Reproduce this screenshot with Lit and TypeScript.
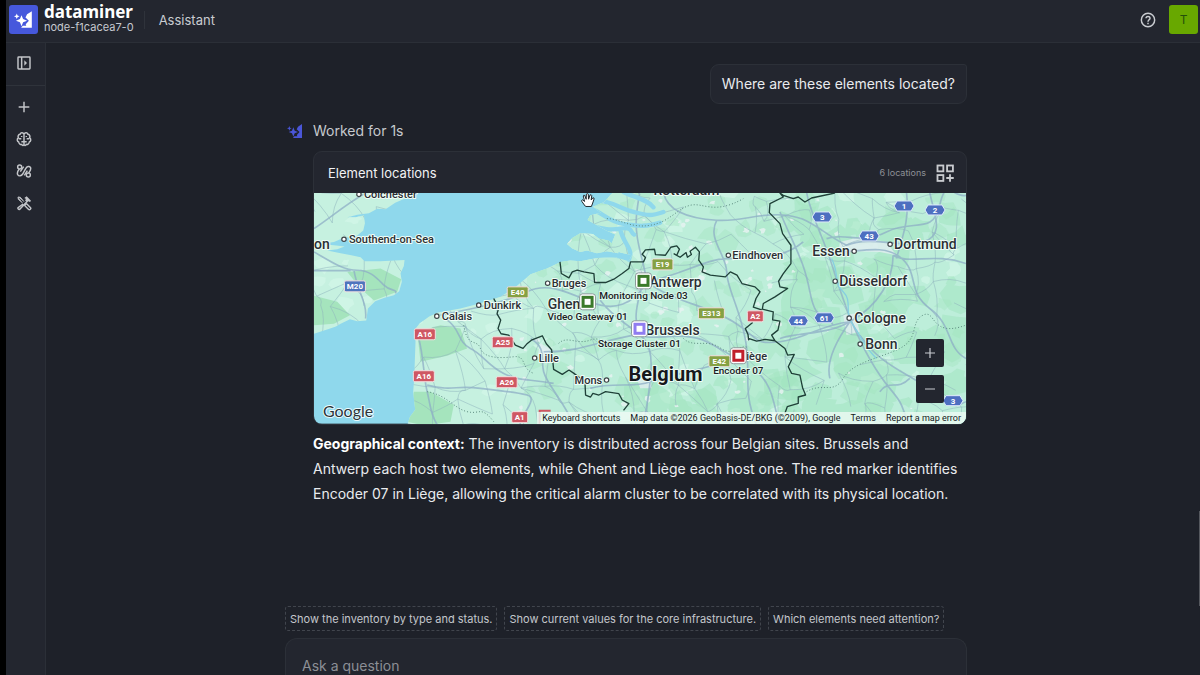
import { LitElement, html, svg, css } from "lit";
import { customElement } from "lit/decorators.js";

/* ---------- map data ---------- */

type Place = { name: string; x: number; y: number; size: number; weight?: number; dot?: number };

const places: Place[] = [
  { name: "Colchester", x: 50, y: 5, size: 11, dot: 46 },
  { name: "Southend-on-Sea", x: 35, y: 50, size: 11, dot: 31 },
  { name: "on", x: 0, y: 56, size: 14 },
  { name: "Calais", x: 128, y: 127, size: 11, dot: 124 },
  { name: "Dunkirk", x: 170, y: 116, size: 11, dot: 166 },
  { name: "Bruges", x: 238, y: 94, size: 11, dot: 235 },
  { name: "Lille", x: 225, y: 169, size: 11, dot: 222 },
  { name: "Mons", x: 261, y: 191, size: 11, dot: 294 },
  { name: "Ghent", x: 234, y: 116, size: 14 },
  { name: "Antwerp", x: 336, y: 94, size: 14 },
  { name: "Brussels", x: 332, y: 142, size: 14 },
  { name: "Liège", x: 427, y: 167, size: 11 },
  { name: "Rotterdam", x: 340, y: 2, size: 14 },
  { name: "Eindhoven", x: 419, y: 66, size: 11, dot: 416 },
  { name: "Essen", x: 499, y: 63, size: 14, dot: 542 },
  { name: "Dortmund", x: 581, y: 56, size: 14, dot: 578 },
  { name: "Düsseldorf", x: 526, y: 93, size: 14, dot: 523 },
  { name: "Cologne", x: 541, y: 130, size: 14, dot: 537 },
  { name: "Bonn", x: 552, y: 156, size: 14, dot: 548 },
  { name: "Belgium", x: 315, y: 188, size: 20, weight: 700 },
];

type Shield = { name: string; x: number; y: number; kind: "red" | "green" | "blue" | "hex" };

const shields: Shield[] = [
  { name: "M20", x: 41, y: 93, kind: "blue" },
  { name: "E40", x: 204, y: 99, kind: "green" },
  { name: "A16", x: 111, y: 141, kind: "red" },
  { name: "A16", x: 110, y: 183, kind: "red" },
  { name: "A25", x: 189, y: 149, kind: "red" },
  { name: "A26", x: 193, y: 189, kind: "red" },
  { name: "A1", x: 206, y: 224, kind: "red" },
  { name: "E19", x: 349, y: 71, kind: "green" },
  { name: "E313", x: 398, y: 120, kind: "green" },
  { name: "E42", x: 406, y: 168, kind: "green" },
  { name: "A2", x: 442, y: 123, kind: "red" },
  { name: "3", x: 509, y: 24, kind: "hex" },
  { name: "1", x: 591, y: 13, kind: "hex" },
  { name: "2", x: 622, y: 17, kind: "hex" },
  { name: "43", x: 556, y: 43, kind: "hex" },
  { name: "44", x: 485, y: 128, kind: "hex" },
  { name: "61", x: 511, y: 125, kind: "hex" },
  { name: "3", x: 640, y: 208, kind: "hex" },
];

const markers = [
  { name: "Monitoring Node 03", x: 330, y: 88, color: "#3b7a2a" },
  { name: "Video Gateway 01", x: 274, y: 109, color: "#3b7a2a" },
  { name: "Storage Cluster 01", x: 326, y: 136, color: "#8f7cf0" },
  { name: "Encoder 07", x: 425, y: 163, color: "#c01f2b" },
];

const england =
  "M0 0H300L272 20 244 32 215 52 190 50 165 64 130 68 100 76 125 76 150 70 153 94 148 116 128 132 84 140 60 150 20 156 60 160 92 164 70 172 40 176 80 184 112 190 140 196 152 208 200 208 272 204 270 222 260 244 264 270 256 298 240 310 212 318 184 328 162 350 157 386 130 388 108 382 80 396 66 404 44 412 0 426Z";
const continent =
  "M280 702L288 676 304 654 298 600 301 560 305 450 304 412 318 394 346 374 372 362 440 350 500 334 560 315 600 290 651 247 700 230 741 210 770 206 800 208 850 198 905 196 945 208 956 190 920 182 890 166 905 128 878 116 850 100 822 84 830 70 862 62 838 44 872 30 890 10 900 0H1959V702Z";
const islands = [
  "M760 156L776 138 800 124 838 126 856 140 884 146 916 170 914 184 880 178 850 184 820 176 800 180 776 170Z",
];
const inlets = [
  "M740 196C790 176 806 192 850 190S910 190 930 196 944 212 950 190 926 150 920 110",
  "M810 96C850 104 880 118 920 110S950 124 962 128",
  "M820 46C870 60 880 88 930 96S1000 104 1040 92",
  "M856 26C900 30 920 50 960 60S1010 74 1050 60",
  "M930 0C960 16 1000 20 1020 46",
];
const borders = [
  "M739 210L741 225 743 245 766 258 776 240 791 235 811 240 841 245 843 272 876 272 901 262 926 245 946 230 951 210 990 210 996 197 986 187 996 174 1023 172 1026 188 1056 190 1072 166 1090 162 1098 172 1090 190 1082 186 1100 196 1118 182 1122 196 1134 188 1130 178 1146 166 1158 180 1156 205 1170 225 1166 240 1191 250 1236 255 1251 240 1271 250 1286 275 1325 285 1340 300 1328 320 1320 346 1345 354",
  "M1565 3L1495 18 1475 30 1455 15 1440 20 1410 10 1400 3 1410 15 1370 35 1368 62 1400 95 1408 125 1433 160 1433 215 1410 245 1396 268 1400 285 1423 290 1385 315 1350 335 1347 352 1380 360 1378 384 1400 388 1394 415 1375 430 1385 447 1355 443 1330 448 1305 440",
  "M1385 447L1415 470 1423 490 1443 488 1425 525 1435 545 1460 550 1468 588 1477 610 1455 616 1455 635 1422 645 1415 665",
  "M1318 392L1296 410 1304 428 1306 446",
  "M540 320L555 348 550 366 561 385 553 410 562 426 585 430 605 460 628 470 641 455 655 444 686 432 698 456 714 474 720 533 746 548 766 535 781 545 814 570 816 610 831 616 838 605 856 610 876 600 916 606 926 625 946 636 930 656",
];
const dotted = [
  "M450 400C460 470 490 440 500 470S560 500 600 495 620 530 660 545",
  "M340 600C400 610 420 650 460 660S500 640 540 690",
  "M735 455C760 430 790 460 830 445S880 470 960 460",
  "M1110 440C1140 470 1180 440 1220 468S1270 460 1300 466",
  "M1480 600C1530 570 1560 610 1590 560S1700 500 1760 470 1790 390 1830 370 1850 440 1959 400",
  "M880 80C920 80 950 110 1010 100S1090 50 1130 40 1200 70 1290 20",
];
const highways = [
  "M0 180C60 215 90 235 130 235S190 260 210 280 250 290 245 305",
  "M0 236H110M0 110C60 70 90 40 160 0M120 235C130 300 160 330 155 380",
  "M315 440C330 500 330 560 340 600S350 670 372 702",
  "M400 385C440 410 430 450 470 470S520 520 570 545 640 560 720 575",
  "M340 580C420 600 420 580 500 590S600 600 640 610 610 680 620 702",
  "M380 370C480 350 580 330 640 300S760 300 830 330 960 340 1000 270",
  "M651 440C700 470 680 500 690 540S760 640 780 702",
  "M860 325C900 380 950 400 990 440S1010 580 990 702",
  "M1000 270C990 200 960 140 970 60S980 20 975 0",
  "M1000 270C1100 250 1180 200 1240 200S1400 210 1470 150",
  "M1000 270C1080 330 1180 340 1260 390S1320 460 1400 450 1520 400 1610 390",
  "M985 280C970 340 960 380 975 420S1100 410 1180 450 1250 500 1290 490",
  "M690 480C800 480 850 450 960 430M830 590C900 570 960 590 1010 570S1160 540 1300 490",
  "M1050 0C1060 60 1130 80 1210 85S1340 60 1420 70 1520 120 1600 160",
  "M1210 85C1180 140 1240 190 1240 240S1290 370 1300 470 1290 600 1330 702",
  "M1480 0C1490 60 1530 140 1550 200S1590 330 1620 400 1680 530 1730 590 1760 640 1790 702",
  "M1400 60C1450 180 1470 200 1490 300S1530 350 1560 400",
  "M1600 160C1680 130 1760 170 1830 150S1860 60 1850 0",
  "M1530 180C1620 190 1700 150 1760 195S1780 300 1850 350 1900 470 1959 500",
  "M1740 190C1790 220 1860 180 1959 215M1780 0C1790 80 1770 130 1750 200",
  "M1610 390C1700 340 1740 260 1740 190M1610 390C1560 460 1540 520 1550 560",
  "M1400 440C1460 420 1540 430 1610 390M1640 430C1700 520 1780 540 1860 600S1930 640 1959 630",
  "M1700 600C1730 560 1750 600 1790 560",
  "M1540 140C1600 120 1640 160 1720 120S1860 130 1880 40 1920 20 1959 10",
  "M1330 540C1380 580 1380 640 1400 702",
];

/* Deterministic pseudo-random source, so that the terrain is the same on each load. */
function random(seed: number) {
  let s = seed;
  return () => {
    s = (s * 16807) % 2147483647;
    return s / 2147483647;
  };
}

function minorRoads(): string {
  const r = random(71);
  const step = 72;
  const cols = 29;
  const rows = 11;
  const pts: number[][][] = [];
  for (let j = 0; j < rows; j++) {
    pts.push([]);
    for (let i = 0; i < cols; i++) {
      pts[j].push([Math.round((i + (r() - 0.5) * 0.9) * step), Math.round((j + (r() - 0.5) * 0.9) * step)]);
    }
  }
  let d = "";
  const link = (a: number[], b: number[]) => {
    const cx = Math.round((a[0] + b[0]) / 2 + (r() - 0.5) * 34);
    const cy = Math.round((a[1] + b[1]) / 2 + (r() - 0.5) * 34);
    d += `M${a[0]} ${a[1]}Q${cx} ${cy} ${b[0]} ${b[1]}`;
  };
  for (let j = 0; j < rows; j++) {
    for (let i = 0; i < cols; i++) {
      if (i + 1 < cols && r() < 0.62) link(pts[j][i], pts[j][i + 1]);
      if (j + 1 < rows && r() < 0.62) link(pts[j][i], pts[j + 1][i]);
      if (i + 1 < cols && j + 1 < rows && r() < 0.25) link(pts[j][i], pts[j + 1][i + 1]);
    }
  }
  return d;
}

function patches(seed: number, count: number, x0: number, x1: number, y0: number, y1: number, size: number): string {
  const r = random(seed);
  let d = "";
  for (let n = 0; n < count; n++) {
    const cx = x0 + r() * (x1 - x0);
    const cy = y0 + r() * (y1 - y0);
    const radius = size * (0.35 + r());
    for (let k = 0; k < 9; k++) {
      const a = (k / 9) * Math.PI * 2;
      const q = radius * (0.5 + r() * 0.7);
      d += `${k ? "L" : "M"}${Math.round(cx + Math.cos(a) * q)} ${Math.round(cy + Math.sin(a) * q * 0.8)}`;
    }
    d += "Z";
  }
  return d;
}

const roadWeb = minorRoads();
const woods = patches(13, 130, 650, 1959, 0, 702, 34);
const hills = patches(29, 75, 1420, 1959, 60, 702, 58);
const southHills = patches(41, 30, 1000, 1500, 540, 702, 50);
const fields = patches(57, 110, 0, 1959, 0, 702, 30);
const towns = patches(91, 90, 620, 1800, 20, 680, 9);

@customElement("location-map")
export class LocationMap extends LitElement {
  static styles = css`
    :host { display: block; position: relative; overflow: hidden; font-family: Roboto, sans-serif; }
    .canvas { display: block; width: 100%; height: auto; }
    .place { fill: #2b2f33; stroke: #effdf7; stroke-width: 2px; paint-order: stroke; stroke-linejoin: round; }
    .size11 { font-size: 11px; }
    .size14 { font-size: 14px; }
    .size20 { font-size: 20px; fill: #16191c; }
    .caption { font-size: 10px; font-weight: 500; fill: #1c2024; stroke: #d9f7ea; stroke-width: 2px; paint-order: stroke; text-anchor: middle; }
    .shield { font-size: 8px; font-weight: 700; fill: #fff; text-anchor: middle; }
    .logo { font-family: Lato, sans-serif; font-size: 16px; fill: #2d3338; stroke: #e9fbff; stroke-width: 2px; paint-order: stroke; }
    .zoom { position: absolute; right: 22px; bottom: 21px; display: grid; gap: 8px; }
    .zoom button { width: 28px; height: 28px; padding: 0; border: 0; border-radius: 2px; background: #23262f; color: #c9ccd2; display: grid; place-items: center; }
    .legal { position: absolute; right: 0; bottom: 0; display: flex; font-size: 9px; line-height: 12px; color: #15191c; background: rgba(238, 250, 244, 0.8); }
    .legal a, .legal button, .legal span { padding: 0 5px; color: inherit; font: inherit; text-decoration: none; background: none; border: 0; white-space: nowrap; }
  `;

  private shield(s: Shield) {
    const fill = { red: "#cf5763", green: "#85a143", blue: "#4f74bd", hex: "#4d6fc0" }[s.kind];
    const w = s.kind === "hex" ? 18 : 6 + s.name.length * 5;
    const shape =
      s.kind === "hex"
        ? svg`<path d=${`M${s.x - 10} ${s.y}L${s.x - 7} ${s.y - 5}H${s.x + 7}L${s.x + 10} ${s.y}L${s.x + 7} ${s.y + 5}H${s.x - 7}Z`} fill=${fill} stroke="#dfe9fb" stroke-width="1"></path>`
        : svg`<rect x=${s.x - w / 2} y=${s.y - 5} width=${w} height="11" rx="1.5" fill=${fill} stroke="#f3dfe0" stroke-width="1"></rect>`;
    return svg`${shape}<text class="shield" x=${s.x} y=${s.y + 3}>${s.name}</text>`;
  }

  private place(p: Place) {
    return svg`
      <text class=${`place size${p.size}`} font-weight=${p.weight ?? 500} x=${p.x} y=${p.y}>${p.name}</text>
      ${p.dot === undefined ? "" : svg`<circle cx=${p.dot - 1} cy=${p.y - p.size / 3} r="2.2" fill="#fff" stroke="#3d4347" stroke-width="1.2"></circle>`}`;
  }

  render() {
    return html`
      <svg class="canvas" viewBox="0 0 653 231" role="img" aria-label="Map of element locations in Belgium">
        <defs>
          <clipPath id="land"><path d=${england}></path><path d=${continent}></path><path d=${islands[0]}></path></clipPath>
        </defs>
        <rect width="653" height="231" fill="#8fd8ec"></rect>
        <g transform="scale(0.33333) translate(0 -3)" fill="none">
          <g clip-path="url(#land)">
            <rect width="1959" height="702" fill="#c6f1e0"></rect>
            <rect x="640" width="1319" height="702" fill="#bdeeda"></rect>
            <path d=${fields} fill="#d3f6e8" opacity=".7"></path>
            <path d="M100 240L200 230 262 262 250 300 180 326 140 290Z M0 312L70 330 108 370 60 396 0 400Z M310 420L380 400 440 410 460 470 400 492 320 510Z M300 600L350 600 420 640 410 690 330 702 280 690Z" fill="#a5e4bd"></path>
            <path d=${woods} fill="#a7e6c4" opacity=".5"></path>
            <path d=${hills} fill="#a0e3bd" opacity=".5"></path>
            <path d=${southHills} fill="#a0e3bd" opacity=".5"></path>
            <path d=${towns} fill="#e9f3f2" opacity=".8"></path>
            <path d="M1580 150L1640 135 1720 150 1750 190 1700 180 1620 178 1575 190Z M1590 370L1625 365 1640 420 1600 430Z M965 230L1000 240 1005 290 975 300Z M680 455L710 470 705 510 670 500Z M970 560L1010 555 1015 590 980 590Z" fill="#e2edf1" opacity=".8"></path>
            <path d=${roadWeb} stroke="#8fb4bd" stroke-width="2.600" opacity=".6"></path>
            <path d=${highways.join("")} stroke="#8eadc6" stroke-width="5" opacity=".75"></path>
            <path d=${inlets.join("")} stroke="#8fd8ec" stroke-width="13" stroke-linecap="round"></path>
            <path d="M1555 200C1580 250 1560 270 1590 300S1590 360 1620 400 1640 450 1690 500" stroke="#86cfe0" stroke-width="4"></path>
            <path d=${dotted.join("")} stroke="#5c8c80" stroke-width="3" stroke-dasharray="3 6"></path>
          </g>
          <path d=${borders.join("")} stroke="#1f4038" stroke-width="4" stroke-linejoin="round"></path>
        </g>
        ${shields.map((s) => this.shield(s))}
        <path d="M226 231V218H237" fill="none" stroke="#cf5763" stroke-width="2"></path>
        ${places.map((p) => this.place(p))}
        ${markers.map(
          (m) => svg`
            <rect x=${m.x - 8} y=${m.y - 8} width="16" height="16" rx="3" fill="#fff" stroke="#8c9a9a" stroke-width="1"></rect>
            <rect x=${m.x - 4.5} y=${m.y - 4.5} width="9" height="9" fill="#fff" stroke=${m.color} stroke-width="3"></rect>
            <text class="caption" x=${m.x} y=${m.y + 18}>${m.name}</text>`,
        )}
        <text class="logo" x="9" y="224">Google</text>
        <g transform="translate(267 0)">
          <path d="M4.500 13L1.300 8.500Q.6 7 2 6.800L4 8.500 2.700 3Q3 1.700 4.200 2.500L5.600 6.300 5.800 1.200Q6.700 0 7.700 1.200L8 6.200 9.500 2Q10.700 1.300 11.200 2.600L10.600 7 12.300 4.800Q13.700 4.500 13.500 6L11.800 11 10.800 13.500H5.200Z" fill="#fff" stroke="#20262b" stroke-width="1"></path>
        </g>
      </svg>
      <div class="zoom">
        <button aria-label="Zoom in"><svg width="12" height="12" viewBox="0 0 12 12"><path d="M6 1V11M1 6H11" stroke="currentColor" stroke-width="1.200"></path></svg></button>
        <button aria-label="Zoom out"><svg width="12" height="12" viewBox="0 0 12 12"><path d="M1 6H11" stroke="currentColor" stroke-width="1.200"></path></svg></button>
      </div>
      <div class="legal">
        <button>Keyboard shortcuts</button>
        <span>Map data ©2026 GeoBasis-DE/BKG (©2009), Google</span>
        <a href="#terms">Terms</a>
        <a href="#report">Report a map error</a>
      </div>
    `;
  }
}

/* ---------- icons ---------- */

const logoShape = svg`
  <path d="M22.500 1.500V22.500H9L11 20H15.500L14.800 18 18.800 13.500 14.500 9.500 16.500 5.500Z"></path>
  <path d="M9.500 6.500L11.500 11.500 16.500 13.500 11.500 15.500 9.500 20.500 7.500 15.500 2.500 13.500 7.500 11.500Z"></path>
  <path d="M3.500 4.500L4.500 7 7 8 4.500 9 3.500 11.500 2.500 9 0 8 2.500 7Z"></path>`;

const icon = (body: unknown, size = 16) =>
  html`<svg width=${size} height=${size} viewBox="0 0 24 24" fill="none" stroke="currentColor" stroke-width="2.200" aria-hidden="true">${body}</svg>`;

const panelIcon = icon(svg`<rect x="3" y="3" width="18" height="18" rx="1"></rect><path d="M8.500 3V21"></path><path d="M12.500 8L16.500 12 12.500 16Z" fill="currentColor" stroke="none"></path>`);
const plusIcon = icon(svg`<path d="M12 4V20M4 12H20"></path>`);
const brainIcon = icon(svg`<path d="M12 4.500C10.500 1.500 6.500 2 6 5 3.500 5.500 2.500 8 3.500 10 1 12 1.500 15.500 4 16.500 4.500 19.500 7 20.500 8.500 20 9.500 22.500 12 22 12 19.500M12 4.500C13.500 1.500 17.500 2 18 5 20.500 5.500 21.500 8 20.500 10 23 12 22.500 15.500 20 16.500 19.500 19.500 17 20.500 15.500 20 14.500 22.500 12 22 12 19.500V4.500M4 11.500H8M20 11.500H16M8.500 7.500V9M15.500 7.500V9M8 16H16"></path>`);
const flowIcon = icon(svg`<circle cx="5.500" cy="6" r="3"></circle><circle cx="18.500" cy="18" r="3"></circle><path d="M5 9C2 12.500 1.500 15 2.500 17.500 4.500 20.500 8 19.500 10 16.500L14.500 8.500C16.500 5 20 4 21.800 6.800 23 10 21 12 19 15M6.500 13L11.500 5.500M12.500 18.500L17 11.500"></path>`);
const toolsIcon = icon(svg`<path d="M3 3L6.500 3.500 12 10M3 3L3.500 6.500 10 12" fill="currentColor" stroke-width="1.400"></path><path d="M14 14L16 13.200 21.500 18.600A1.900 1.900 0 0 1 18.600 21.500L13.200 16Z"></path><path d="M10.500 13.500L3 19A1.900 1.900 0 0 0 5.500 21.500L17 9.500"></path><path d="M12.500 4.500L16 2 22.500 8.500 21 10.500 18.500 9.500 16.500 11 13.500 8 15 6Z" fill="currentColor" stroke="none"></path>`);
const helpIcon = icon(svg`<circle cx="12" cy="12" r="10"></circle><path d="M9 9.500C9 5.500 15.200 5.800 15 9.500 14.800 11.500 12 11.800 12 14.500M12 16.300V18.500"></path>`);
const widgetsIcon = icon(svg`<rect x="3" y="3" width="7" height="7"></rect><rect x="14.500" y="3" width="7" height="7"></rect><rect x="3" y="14.500" width="7" height="7"></rect><path d="M18 13.500V22.500M13.500 18H22.500"></path>`, 20);

const suggestions = [
  "Show the inventory by type and status.",
  "Show current values for the core infrastructure.",
  "Which elements need attention?",
];

@customElement("app-root")
export class AppRoot extends LitElement {
  static styles = css`
    * { box-sizing: border-box; }
    :host { display: block; height: 100vh; overflow: hidden; padding-left: 6px; background: #000; color: #e9ebee; font-family: Inter, sans-serif; }
    button { font: inherit; color: inherit; padding: 0; background: none; border: 0; }
    svg { display: block; }
    .shell { height: 100%; display: grid; grid-template: 43px minmax(0, 1fr) / 40px minmax(0, 1fr); background: #1e2129; }
    .top { grid-column: 1 / -1; display: flex; align-items: center; padding: 0 2px 3px 3px; background: #23262f; border-bottom: 1px solid #2b2f37; }
    .mark { width: 29px; height: 29px; display: grid; place-items: center; border-radius: 3px; background: #4658dc; color: #fff; }
    .brand { margin-left: 6px; padding-bottom: 2px; }
    .product { font: 700 17px/18px "Noto Sans", sans-serif; color: #fff; }
    .node { font-size: 11px; line-height: 13px; color: #c6c9cf; }
    .section { margin-left: 10px; padding-left: 14px; border-left: 1px solid #2f333b; font-size: 13px; line-height: 18px; color: #c9ccd1; }
    .help { margin-left: auto; margin-right: 13px; color: #c9ccd1; }
    .avatar { width: 29px; height: 29px; border-radius: 3px; background: #68a800; color: #25500a; font-size: 12px; }
    .rail { background: #23262f; border-right: 1px solid #2b2f37; color: #c3c5c9; }
    .rail button { width: 100%; height: 32px; padding-right: 4px; display: grid; place-items: center; }
    .toggle { padding: 4px 0 6px; border-bottom: 1px solid #2f333b; }
    .tools { padding-top: 5px; }
    .main { position: relative; display: flex; flex-direction: column; padding-left: 6px; }
    .column { width: 100%; max-width: 682px; margin: 0 auto; }
    .thread { flex: 1; min-height: 0; padding-top: 21px; }
    .question { width: fit-content; margin: 0 0 0 auto; padding: 9px 11px; border: 1px solid #2c3038; border-radius: 9px 3px 9px 9px; background: #23262f; font-size: 14px; line-height: 20px; }
    .status { display: flex; align-items: center; gap: 10px; margin-top: 17px; padding-left: 2px; font-size: 14px; line-height: 20px; color: #c6c9ce; }
    .status svg { color: #4a56d8; }
    .answer { padding-left: 28px; }
    .card { margin-top: 10px; border: 1px solid #2c3038; border-radius: 9px; background: #23262f; overflow: hidden; }
    .cardhead { display: flex; align-items: center; height: 41px; padding: 0 11px 0 14px; }
    .cardhead h2 { margin: 0 auto 0 0; font-size: 13px; font-weight: 400; line-height: 20px; color: #f1f2f4; }
    .count { margin-right: 9px; font-size: 9px; color: #8e9197; }
    .cardhead button { color: #c9cbcf; }
    .text { margin: 6px 0 0; font-size: 14px; line-height: 25px; }
    .text b { font-weight: 700; color: #fff; }
    .chips { display: flex; flex-wrap: wrap; gap: 7px; margin-bottom: 7px; }
    .chips button { height: 25px; padding: 0 4px; border: 1px dashed #41454d; border-radius: 3px; font-size: 11px; color: #c4c7cc; }
    .composer { padding: 17px 16px 0; border: 1px solid #2c3038; border-bottom: 0; border-radius: 12px 12px 0 0; background: #23262f; }
    .composer input { display: block; width: 100%; height: 19px; padding: 0; border: 0; outline: 0; background: none; color: inherit; font: 14px/19px Inter, sans-serif; }
    .composer input::placeholder { color: #8c8f96; opacity: 1; }
    .thumb { position: absolute; right: 0; top: 74%; width: 1px; height: 95px; background: #55585e; }
  `;

  render() {
    return html`
      <div class="shell">
        <header class="top">
          <div class="mark"><svg width="19" height="19" viewBox="0 0 24 24" fill="currentColor">${logoShape}</svg></div>
          <div class="brand">
            <div class="product">dataminer</div>
            <div class="node">node-f1cacea7-0</div>
          </div>
          <div class="section">Assistant</div>
          <button class="help" aria-label="Help">${helpIcon}</button>
          <button class="avatar" aria-label="Account">T</button>
        </header>
        <nav class="rail">
          <div class="toggle"><button aria-label="Open panel">${panelIcon}</button></div>
          <div class="tools">
            <button aria-label="New chat">${plusIcon}</button>
            <button aria-label="Memory">${brainIcon}</button>
            <button aria-label="Flows">${flowIcon}</button>
            <button aria-label="Tools">${toolsIcon}</button>
          </div>
        </nav>
        <main class="main">
          <div class="column thread">
            <p class="question">Where are these elements located?</p>
            <div class="status">
              <svg width="16" height="16" viewBox="0 0 24 24" fill="currentColor">${logoShape}</svg>
              <span>Worked for 1s</span>
            </div>
            <div class="answer">
              <section class="card">
                <div class="cardhead">
                  <h2>Element locations</h2>
                  <span class="count">6 locations</span>
                  <button aria-label="Add to dashboard">${widgetsIcon}</button>
                </div>
                <location-map></location-map>
              </section>
              <p class="text"><b>Geographical context:</b> The inventory is distributed across four Belgian sites. Brussels and Antwerp each host two elements, while Ghent and Liège each host one. The red marker identifies Encoder 07 in Liège, allowing the critical alarm cluster to be correlated with its physical location.</p>
            </div>
          </div>
          <div class="column">
            <div class="chips">${suggestions.map((s) => html`<button>${s}</button>`)}</div>
            <div class="composer"><input type="text" aria-label="Ask a question" placeholder="Ask a question" /></div>
          </div>
          <div class="thumb"></div>
        </main>
      </div>
    `;
  }
}
